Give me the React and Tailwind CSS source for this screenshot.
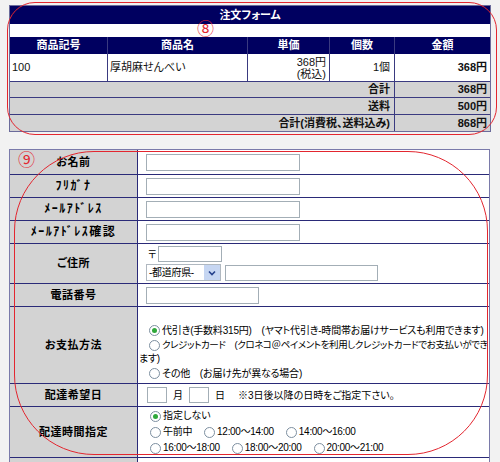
import React from "react";

const jp = "font-['Liberation_Sans','Noto_Sans_CJK_JP',sans-serif] [font-feature-settings:'palt']";

function Radio({ on }) {
  return (
    <span className="inline-flex h-[11px] w-[11px] shrink-0 items-center justify-center rounded-full border border-[#7d8fa0] bg-white">
      {on && <span className="h-[5px] w-[5px] rounded-full bg-[#2fa83a]" />}
    </span>
  );
}

function Field({ w, h = "h-[17px]", className = "" }) {
  return (
    <input
      readOnly
      className={`${w} ${h} ${className} border border-[#a3aeb6] bg-white outline-none`}
    />
  );
}

function Label({ children, wide }) {
  return (
    <div
      className={`flex items-center justify-center bg-[#d3d3d3] font-bold text-black ${
        wide ? "text-[12px] tracking-[1.5px]" : "text-[11px] tracking-[0.5px]"
      }`}
    >
      {children}
    </div>
  );
}

function Opt({ on, children, className = "" }) {
  return (
    <span className={`inline-flex items-center gap-[2px] ${className}`}>
      <Radio on={on} />
      <span>{children}</span>
    </span>
  );
}

function OrderTable() {
  const head = ["商品記号", "商品名", "単価", "個数", "金額"];
  const totals = [
    ["合計", "368円"],
    ["送料", "500円"],
    ["合計(消費税、送料込み)", "868円"],
  ];
  return (
    <div className="w-[482px] border border-[#6b6b9b] bg-white">
      <div className="flex h-[18px] items-center justify-center bg-[#000060] text-[11px] font-bold text-white">
        注文フォーム
      </div>
      <div className="h-[13px] bg-white" />
      <div className="grid grid-cols-[97px_139px_81px_64px_95px] grid-rows-[16px_27px_15px_16px_16px] gap-px bg-[#3a3a80] text-[11px] text-[#111]">
        {head.map((h) => (
          <div key={h} className="-mb-px flex items-center justify-center bg-[#000060] font-bold text-white">
            {h}
          </div>
        ))}
        <div className="flex items-center bg-white pl-[2px]">100</div>
        <div className="flex items-center bg-white pl-[2px]">厚胡麻せんべい</div>
        <div className="flex flex-col items-end justify-center bg-white pr-[3px] leading-[12px]">
          <span>368円</span>
          <span>(税込)</span>
        </div>
        <div className="flex items-center justify-end bg-white pr-[4px]">1個</div>
        <div className="flex items-center justify-end bg-white pr-[3px] font-bold">368円</div>
        {totals.map(([k, v]) => (
          <React.Fragment key={k}>
            <div className="col-span-4 flex items-center justify-end bg-[#d3d3d3] pr-[4px] font-bold">{k}</div>
            <div className="flex items-center justify-end bg-[#d3d3d3] pr-[3px] font-bold">{v}</div>
          </React.Fragment>
        ))}
      </div>
    </div>
  );
}

function CustomerForm() {
  return (
    <div className="grid w-[481px] grid-cols-[127px_minmax(0,1fr)] grid-rows-[24px_22px_22px_22px_39px_22px_76px_22px_50px_20px] gap-px border border-[#7a7aaa] bg-[#2a2a78] text-[10px] text-black">
      <Label>お名前</Label>
      <div className="flex items-center bg-white pl-[8px]">
        <Field w="w-[154px]" />
      </div>

      <Label wide>ﾌﾘｶﾞﾅ</Label>
      <div className="flex items-center bg-white pl-[8px]">
        <Field w="w-[154px]" />
      </div>

      <Label wide>ﾒｰﾙｱﾄﾞﾚｽ</Label>
      <div className="flex items-center bg-white pl-[8px]">
        <Field w="w-[154px]" />
      </div>

      <Label wide>ﾒｰﾙｱﾄﾞﾚｽ確認</Label>
      <div className="flex items-center bg-white pl-[8px]">
        <Field w="w-[154px]" />
      </div>

      <Label>ご住所</Label>
      <div className="flex flex-col justify-center gap-[2px] bg-white pl-[8px]">
        <div className="flex items-center gap-[2px]">
          <span className="w-[10px] pl-[2px]">〒</span>
          <Field w="w-[64px]" h="h-[16px]" />
        </div>
        <div className="flex items-center gap-[4px]">
          <div className="flex h-[17px] w-[75px] items-center justify-between border border-[#b0b8c0] bg-white pl-[2px]">
            <span className="tracking-[-0.3px]">-都道府県-</span>
            <span className="flex h-[15px] w-[16px] items-center justify-center bg-[#c6d6f2]">
              <svg width="8" height="6" viewBox="0 0 8 6">
                <path d="M1 1.5 L4 4.5 L7 1.5" fill="none" stroke="#24408c" strokeWidth="1.6" />
              </svg>
            </span>
          </div>
          <Field w="w-[153px]" h="h-[16px]" />
        </div>
      </div>

      <Label>電話番号</Label>
      <div className="flex items-center bg-white pl-[8px]">
        <Field w="w-[113px]" />
      </div>

      <Label>お支払方法</Label>
      <div className="flex flex-col justify-start overflow-hidden bg-white pl-[1px] pt-[16px] leading-[15px] tracking-[-0.2px]">
        <div className="flex items-center whitespace-nowrap pl-[10px]">
          <Opt on>代引き(手数料315円)　(ヤマト代引き-時間帯お届けサービスも利用できます)</Opt>
        </div>
        <div className="whitespace-nowrap leading-[14px]">
          <span className="ml-[10px] mr-[2px] inline-flex items-center align-middle">
            <Radio />
          </span>
          <span className="align-middle text-[9.5px] tracking-[-0.4px]">クレジットカード　(クロネコ＠ペイメントを利用しクレジットカードでお支払いができ</span>
          <br />
          ます)
        </div>
        <div className="flex items-center whitespace-nowrap pl-[10px]">
          <Opt>その他　(お届け先が異なる場合)</Opt>
        </div>
      </div>

      <Label>配達希望日</Label>
      <div className="flex items-center bg-white pl-[9px]">
        <Field w="w-[20px]" h="h-[16px]" />
        <span className="mx-[6px]">月</span>
        <Field w="w-[20px]" h="h-[16px]" />
        <span className="ml-[6px]">日</span>
        <span className="ml-[13px]">※3日後以降の日時をご指定下さい。</span>
      </div>

      <Label>配達時間指定</Label>
      <div className="flex flex-col justify-center bg-white pl-[12px] leading-[16px]">
        <div className="flex items-center whitespace-nowrap">
          <Opt on>指定しない</Opt>
        </div>
        <div className="flex items-center whitespace-nowrap tracking-[-0.3px]">
          <Opt className="mr-[12px]">午前中</Opt>
          <Opt className="mr-[12px]">12:00～14:00</Opt>
          <Opt>14:00～16:00</Opt>
        </div>
        <div className="flex items-center whitespace-nowrap tracking-[-0.3px]">
          <Opt className="mr-[12px]">16:00～18:00</Opt>
          <Opt className="mr-[12px]">18:00～20:00</Opt>
          <Opt>20:00～21:00</Opt>
        </div>
      </div>

      <div className="bg-[#d3d3d3]" />
      <div className="bg-white" />
    </div>
  );
}

export default function App() {
  return (
    <div className={`relative h-[462px] w-[500px] overflow-hidden bg-[#f2f2f2] ${jp}`}>
      <div className="flex flex-col gap-[17px] pl-[9px] pt-[5px]">
        <OrderTable />
        <CustomerForm />
      </div>

      {/* red callout rings with step numbers */}
      <div className="pointer-events-none absolute left-[7px] top-[2px] h-[133px] w-[490px] rounded-[28px] border border-[#e3262f]" />
      <span className="pointer-events-none absolute left-[197px] top-[21px] text-[17px] leading-none text-[#e3262f]">⑧</span>
      <div className="pointer-events-none absolute left-[14px] top-[151px] h-[304px] w-[474px] rounded-[80px] border border-[#e3262f]" />
      <span className="pointer-events-none absolute left-[18px] top-[152px] text-[17px] leading-none text-[#e3262f]">⑨</span>
    </div>
  );
}
